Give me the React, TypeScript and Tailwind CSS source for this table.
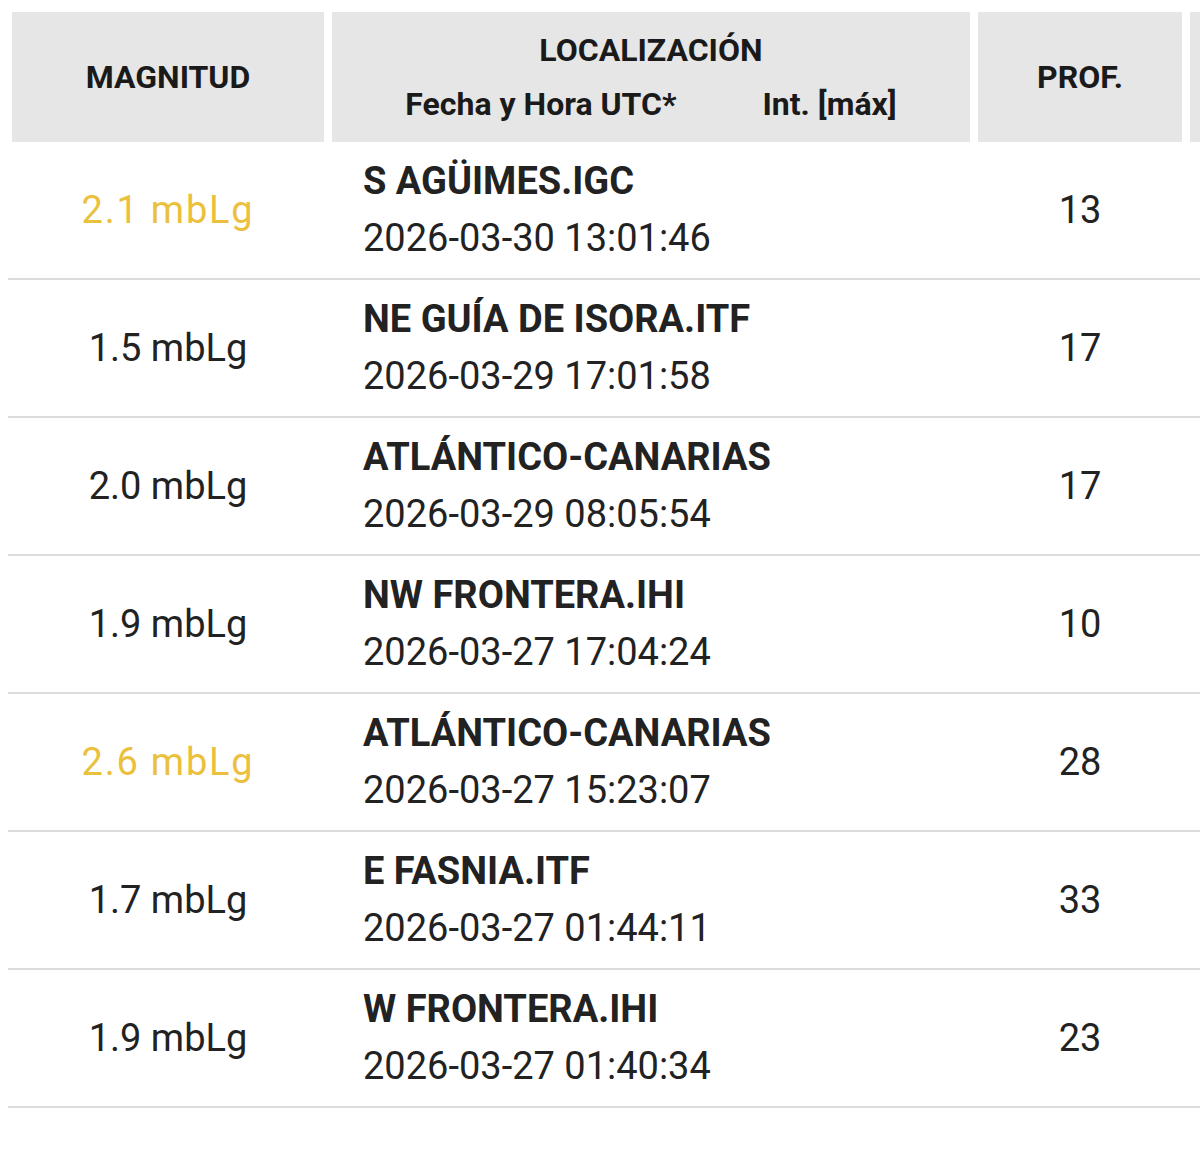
const rows = [
  { mag: "2.1 mbLg", hot: true, place: "S AGÜIMES.IGC", date: "2026-03-30 13:01:46", prof: "13" },
  { mag: "1.5 mbLg", hot: false, place: "NE GUÍA DE ISORA.ITF", date: "2026-03-29 17:01:58", prof: "17" },
  { mag: "2.0 mbLg", hot: false, place: "ATLÁNTICO-CANARIAS", date: "2026-03-29 08:05:54", prof: "17" },
  { mag: "1.9 mbLg", hot: false, place: "NW FRONTERA.IHI", date: "2026-03-27 17:04:24", prof: "10" },
  { mag: "2.6 mbLg", hot: true, place: "ATLÁNTICO-CANARIAS", date: "2026-03-27 15:23:07", prof: "28" },
  { mag: "1.7 mbLg", hot: false, place: "E FASNIA.ITF", date: "2026-03-27 01:44:11", prof: "33" },
  { mag: "1.9 mbLg", hot: false, place: "W FRONTERA.IHI", date: "2026-03-27 01:40:34", prof: "23" },
];

export default function App() {
  return (
    <div className="w-[1200px] h-[1158px] overflow-hidden bg-white font-['Roboto',sans-serif] text-[#222]">
      <div className="w-[1420px] pl-[8px]">
        {/* Header */}
        <div className="flex gap-2 pt-[12px] pl-[4px] text-[32px] font-bold leading-[54px] text-[#1a1a1a]">
          <div className="w-[312px] h-[130px] bg-[#e6e6e6] flex items-center justify-center">MAGNITUD</div>
          <div className="w-[638px] h-[130px] bg-[#e6e6e6] flex flex-col items-center justify-center">
            <div>LOCALIZACIÓN</div>
            <div className="flex gap-[86px]">
              <span>Fecha y Hora UTC*</span>
              <span>Int. [máx]</span>
            </div>
          </div>
          <div className="w-[204px] h-[130px] bg-[#e6e6e6] flex items-center justify-center">PROF.</div>
          <div className="w-[200px] h-[130px] bg-[#e6e6e6]"></div>
        </div>

        {/* Rows */}
        {rows.map((r, i) => (
          <div key={i} className="flex items-center gap-2 pl-[4px] h-[138px] border-b-2 border-[#dcdcdc] text-[38px] leading-[57px]">
            <div
              className={
                r.hot
                  ? "w-[312px] text-center text-[#ebc03c] tracking-[1.8px]"
                  : "w-[312px] text-center"
              }
            >
              {r.mag}
            </div>
            <div className="w-[638px] pl-[31px]">
              <div className="font-bold">{r.place}</div>
              <div>{r.date}</div>
            </div>
            <div className="w-[204px] text-center">{r.prof}</div>
            <div className="w-[200px]"></div>
          </div>
        ))}
      </div>
    </div>
  );
}
